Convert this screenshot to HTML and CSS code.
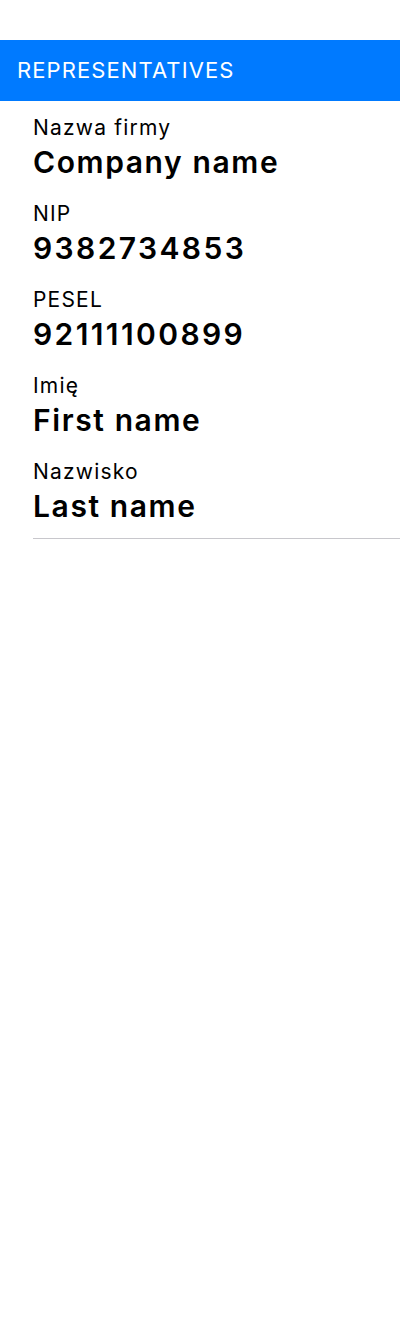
FILE: index.html
```html
<!DOCTYPE html>
<html>
<head>
<meta charset="utf-8">
<link rel="stylesheet" href="styles.css">
</head>
<body>
<div class="top-space"></div>
<header class="section-header">REPRESENTATIVES</header>
<div class="list">
  <div class="row"><div class="label">Nazwa firmy</div><div class="value">Company name</div></div>
  <div class="row"><div class="label">NIP</div><div class="value num">9382734853</div></div>
  <div class="row"><div class="label">PESEL</div><div class="value num">92111100899</div></div>
  <div class="row"><div class="label">Imię</div><div class="value">First name</div></div>
  <div class="row"><div class="label">Nazwisko</div><div class="value">Last name</div></div>
</div>
</body>
</html>
```
FILE: styles.css
```css
html, body {
  margin: 0;
  padding: 0;
  background: #ffffff;
  font-family: Inter, "Noto Sans", sans-serif;
  color: #000;
}
.top-space {
  height: 40px;
}
.section-header {
  height: 61px;
  background: #007aff;
  color: #ffffff;
  font-size: 22px;
  letter-spacing: 1.1px;
  line-height: 61px;
  padding-left: 17px;
  box-sizing: border-box;
}
.list {
  margin-left: 33px;
  padding-bottom: 7px;
  border-bottom: 1px solid #c8c7cc;
}
.row {
  padding: 15px 0 7px;
}
.label {
  font-size: 21px;
  line-height: 24px;
  letter-spacing: 1.2px;
}
.value {
  margin-top: 4px;
  font-size: 30px;
  line-height: 36px;
  font-weight: 600;
  letter-spacing: 1.6px;
}
.value.num {
  letter-spacing: 2.4px;
}
```
